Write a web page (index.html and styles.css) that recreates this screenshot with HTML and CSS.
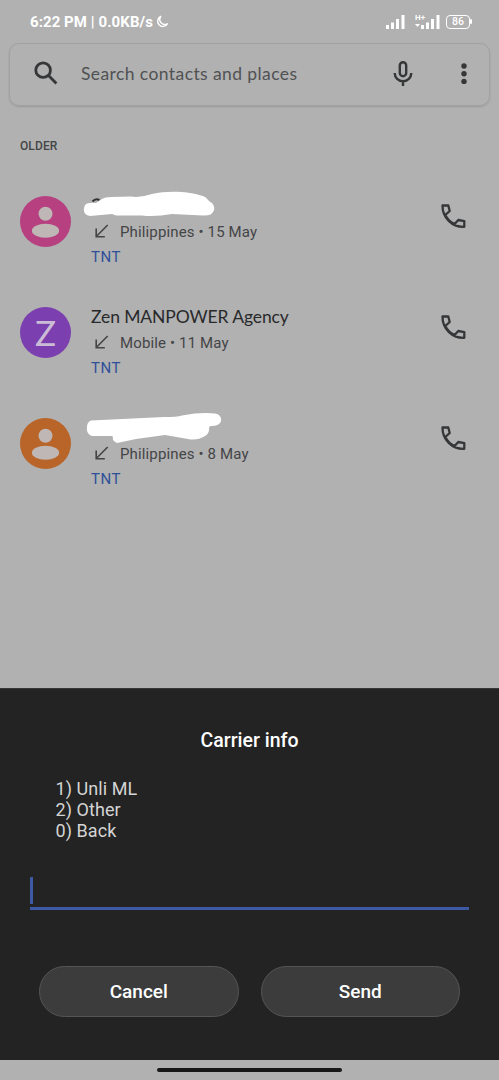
FILE: index.html
```html
<!DOCTYPE html>
<html lang="en">
<head>
<meta charset="utf-8">
<title>Phone</title>
<link rel="stylesheet" href="styles.css">
</head>
<body>
<svg class="defs" width="0" height="0">
  <symbol id="call" viewBox="0 0 25 25"><path d="M1.500 1.500H7.300L8.700 7L4.300 11Q7.500 17.500 13.600 20L17.300 16L23.300 17.200V22.800C11 23.300 1.300 13.500 1.500 1.500z" fill="none" stroke="currentColor" stroke-width="2.300" stroke-linejoin="round"/></symbol>
  <symbol id="received" viewBox="0 0 14 14"><path d="M12.700 1L1.500 12.200M1.200 4.500v8.200h8.600" fill="none" stroke="currentColor" stroke-width="1.600"/></symbol>
  <symbol id="person" viewBox="0 0 51 51"><circle cx="25.500" cy="17.700" r="7"/><ellipse cx="25.500" cy="34.700" rx="13.600" ry="7"/></symbol>
  <symbol id="bars" viewBox="0 0 19 14"><path d="M0 10h3v4H0zM5 7.500h3V14H5zM10 4h3v10h-3zM15.500 0h3v14h-3z"/></symbol>
</svg>
<div class="screen">
  <header class="status">
    <span class="clock">6:22 PM | 0.0KB/s</span>
    <svg class="moon" viewBox="0 0 13 13"><path d="M5 1.200A5.300 5.300 0 1 0 11.700 8.500 5 5 0 0 1 5 1.200z" fill="none" stroke="#fff" stroke-width="1.400"/></svg>
    <div class="indicators">
      <svg class="bars"><use href="#bars"/></svg>
      <div class="data"><span class="net">H+</span><svg class="updown" viewBox="0 0 5 5"><path d="M0 0h5L2.500 3z"/></svg><svg class="bars"><use href="#bars"/></svg></div>
      <div class="battery"><span>86</span></div>
    </div>
  </header>
  <div class="search">
    <svg class="lens" viewBox="0 0 24 24"><circle cx="9" cy="9" r="6.500"/><path d="M13.800 13.800l7 7"/></svg>
    <span class="placeholder">Search contacts and places</span>
    <svg class="mic" viewBox="0 0 20 26"><rect x="6.800" y="1.200" width="6.400" height="14" rx="3.200"/><path d="M1.700 12a8.300 8.300 0 0 0 16.600 0M10 20.500V25"/></svg>
    <svg class="more" viewBox="0 0 6 22"><circle cx="3" cy="3" r="2.700"/><circle cx="3" cy="10.700" r="2.700"/><circle cx="3" cy="18.400" r="2.700"/></svg>
  </div>
  <h2 class="section">OLDER</h2>
  <main class="calls">
    <article class="call">
      <div class="avatar pink"><svg><use href="#person"/></svg></div>
      <div class="details">
        <div class="name"></div>
        <div class="meta"><svg><use href="#received"/></svg><span>Philippines • 15 May</span></div>
        <div class="sim">TNT</div>
      </div>
      <svg class="dial"><use href="#call"/></svg>
      <svg class="mark" viewBox="0 0 145 35"><path d="M12.500 10.500q3-3.500 7-1.500" fill="none" stroke="#333" stroke-width="2"/><path d="M5 14Q8 11 16 12L22 8Q25 6 31 6L51 5.500Q60 7 72 3C88-1 111 1 119 4C129 6 126 9 132 12Q136 17 133 21Q131 25 123 24.500L92 23Q75 26 62 24.500L36 24.500L32 23L10 25Q3 24 4 17z"/></svg>
    </article>
    <article class="call">
      <div class="avatar purple">Z</div>
      <div class="details">
        <div class="name">Zen MANPOWER Agency</div>
        <div class="meta"><svg><use href="#received"/></svg><span>Mobile • 11 May</span></div>
        <div class="sim">TNT</div>
      </div>
      <svg class="dial"><use href="#call"/></svg>
    </article>
    <article class="call">
      <div class="avatar orange"><svg><use href="#person"/></svg></div>
      <div class="details">
        <div class="name"></div>
        <div class="meta"><svg><use href="#received"/></svg><span>Philippines • 8 May</span></div>
        <div class="sim">TNT</div>
      </div>
      <svg class="dial"><use href="#call"/></svg>
      <svg class="mark" viewBox="0 0 145 35"><path d="M11 7.500L84 4Q97 4 102 2.500Q121-1 135 0.500Q142 2 141 8Q140 13 131 13L129 14Q130 20 125 23Q117 28 108 26L85 22L56 26L37 30Q32 28 33 24L32 23L12 23Q6 21 7 14Q7 9 11 7.500z"/></svg>
    </article>
  </main>
  <section class="sheet">
    <h1 class="title">Carrier info</h1>
    <div class="message">1) Unli ML<br>2) Other<br>0) Back</div>
    <div class="field"><div class="caret"></div></div>
    <div class="actions"><button class="action">Cancel</button><button class="action">Send</button></div>
  </section>
  <footer class="navigation"><div class="handle"></div></footer>
</div>
</body>
</html>
```
FILE: styles.css
```css
* { box-sizing: border-box; }
body { margin: 0; background: #b1b1b1; font-family: Roboto, sans-serif; color: #444547; }
svg { display: block; flex: none; }
.defs { position: absolute; }
.screen { width: 499px; height: 1080px; display: flex; flex-direction: column; overflow: hidden; }
.status { height: 43px; flex: none; padding: 0 28px 0 30px; display: flex; align-items: center; color: #fff; }
.clock { font-size: 15px; font-weight: 700; letter-spacing: 0.07px; white-space: nowrap; }
.moon { width: 13px; height: 13px; margin-left: 3px; }
.indicators { margin-left: auto; display: flex; align-items: center; fill: #fff; }
.bars { width: 19px; height: 14px; }
.data { position: relative; margin: 0 6px 0 16px; }
.net { position: absolute; left: -6px; top: -1px; font-size: 8px; line-height: 8px; font-weight: 700; }
.updown { position: absolute; left: -6px; top: 9px; width: 5px; height: 5px; }
.battery { position: relative; width: 24px; height: 14px; margin-right: 1px; border: 1.5px solid #fff; border-radius: 4px; display: flex; align-items: center; justify-content: center; font-size: 10.5px; line-height: 11px; font-weight: 500; }
.battery::after { content: ""; position: absolute; right: -3px; top: 3px; width: 2px; height: 5px; background: #fff; border-radius: 1px; }
.search { height: 63px; flex: none; margin: 0 9px; padding: 0 22px 2px 23px; display: flex; align-items: center; border: 1px solid #a1a1a1; border-radius: 10px; box-shadow: 0 1px 2px #0002; }
.lens { width: 27px; height: 27px; fill: none; stroke: #353638; stroke-width: 2.5; }
.placeholder { font-family: Lato, sans-serif; font-size: 17.5px; margin-left: 21px; letter-spacing: 0.41px; color: #505153; white-space: nowrap; }
.mic { width: 20px; height: 26px; margin-left: auto; fill: none; stroke: #353638; stroke-width: 2.4; }
.more { width: 6px; height: 22px; margin-left: 48px; fill: #353638; }
.section { height: 60px; flex: none; margin: 0; padding: 32px 20px 0; font-size: 12px; line-height: 16px; font-weight: 500; letter-spacing: 0.1px; }
.calls { flex: 1; }
.call { position: relative; height: 111px; display: flex; padding: 0 33px 0 20px; }
.avatar { width: 51px; height: 51px; margin-top: 30px; flex: none; border-radius: 50%; color: #cbbcd6; font-size: 35px; line-height: 51px; text-align: center; font-weight: 400; font-family: Lato, sans-serif; }
.avatar svg { width: 51px; height: 51px; fill: #bfb7b5; }
.pink { background: #b64080; }
.purple { background: #7b3fb0; }
.orange { background: #b9652a; }
.details { flex: 1; margin-left: 20px; padding-top: 27px; }
.name { height: 26px; font-family: Lato, sans-serif; font-size: 17.5px; line-height: 26px; color: #28292b; letter-spacing: -0.1px; }
.meta { height: 26px; display: flex; align-items: center; font-size: 15px; letter-spacing: 0.14px; }
.meta svg { width: 14px; height: 14px; margin: -3px 11px 0 4px; }
.sim { font-size: 15px; line-height: 25px; color: #304f99; letter-spacing: 0.5px; }
.dial { width: 25px; height: 25px; margin-top: 38px; color: #353638; }
.mark { position: absolute; left: 80px; top: 25px; width: 145px; height: 35px; fill: #fff; }
.sheet { height: 372px; flex: none; padding: 38px 30px 0; background: #232323; border-top: 1px solid #363636; }
.title { margin: 0; text-align: center; font-size: 19.5px; line-height: 28px; font-weight: 500; color: #fff; }
.message { margin: 23px 0 0 25.5px; font-size: 18px; line-height: 21px; letter-spacing: 0.06px; color: #d4d4d4; }
.field { height: 33px; margin-top: 36px; border-bottom: 3px solid #3e59a4; }
.caret { width: 3px; height: 27px; background: #3e59a4; }
.actions { display: flex; gap: 22px; margin: 56px 9px 0; }
.action { flex: 1; height: 51px; padding: 0; border: 1px solid #555; border-radius: 26px; background: #3c3c3c; color: #fff; font: 500 19px Roboto, sans-serif; }
.navigation { height: 20px; flex: none; display: flex; justify-content: center; padding-top: 8px; }
.handle { width: 185px; height: 4px; border-radius: 2px; background: #181818; }
```
